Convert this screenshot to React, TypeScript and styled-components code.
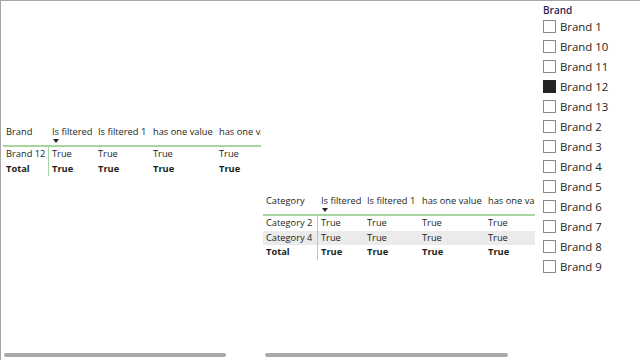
import React from "react";
import styled, { createGlobalStyle } from "styled-components";

const Global = createGlobalStyle`
  html, body { margin: 0; padding: 0; background: #ffffff; }
  body { font-family: "Open Sans", "Noto Sans", sans-serif; color: #252423; }
`;

const Page = styled.div`
  width: 640px;
  height: 360px;
  box-sizing: border-box;
  border-top: 1px solid #a6a6a6;
  border-left: 1px solid #a6a6a6;
  display: flex;
  overflow: hidden;
`;

const Visual = styled.div<{ $w: number; $top: number; $ml: number }>`
  width: ${(p) => p.$w}px;
  margin-left: ${(p) => p.$ml}px;
  padding-top: ${(p) => p.$top}px;
  box-sizing: border-box;
  display: flex;
  flex-direction: column;
  height: 100%;
  flex-shrink: 0;
`;

const TableClip = styled.div<{ $w: number }>`
  width: ${(p) => p.$w}px;
  overflow: hidden;
`;

const Grid = styled.div<{ $cols: string }>`
  display: grid;
  grid-template-columns: ${(p) => p.$cols};
  font-family: "Open Sans", "Noto Sans", sans-serif;
  font-size: 9.3px;
  line-height: 14px;
  width: max-content;
  color: #201f1e;
`;

const HeadCell = styled.div`
  height: 20px;
  padding: 1px 3px 0;
  white-space: nowrap;
  border-bottom: 2px solid #a8d5a0;
  position: relative;
  box-sizing: content-box;
`;

const SortArrow = styled.span`
  position: absolute;
  left: 4px;
  top: 15px;
  width: 0;
  height: 0;
  border-left: 3px solid transparent;
  border-right: 3px solid transparent;
  border-top: 4px solid #252423;
`;

const Cell = styled.div<{ $first?: boolean; $bold?: boolean; $alt?: boolean }>`
  height: 14.5px;
  line-height: 14px;
  padding: 0 3px;
  white-space: nowrap;
  font-weight: ${(p) => (p.$bold ? 700 : 400)};
  background: ${(p) => (p.$alt ? "#ebebeb" : "transparent")};
  border-right: ${(p) => (p.$first ? "1px solid #a8d5a0" : "none")};
`;

const Scroll = styled.div<{ $w: number; $ml: number }>`
  margin-top: auto;
  margin-bottom: 3px;
  margin-left: ${(p) => p.$ml}px;
  width: ${(p) => p.$w}px;
  height: 4px;
  border-radius: 2px;
  background: #a9a9a9;
`;

const Slicer = styled.div`
  margin-left: 8px;
  padding-top: 2px;
  display: flex;
  flex-direction: column;
  font-family: "Open Sans", "Noto Sans", sans-serif;
`;

const SlicerTitle = styled.div`
  font-size: 10px;
  line-height: 14px;
  color: #1f2a5c;
  font-weight: 600;
  margin-bottom: -1px;
`;

const Item = styled.div`
  display: flex;
  align-items: center;
  height: 20px;
  font-size: 11.4px;
  color: #252423;
`;

const Box = styled.span<{ $on?: boolean }>`
  width: 13px;
  height: 13px;
  box-sizing: border-box;
  border: 1px solid ${(p) => (p.$on ? "#252423" : "#8a8a8a")};
  background: ${(p) => (p.$on ? "#252423" : "#fff")};
  margin-right: 4px;
`;

const headers = ["Is filtered", "Is filtered 1", "has one value", "has one value 1"];

type Row = { label: string; vals: string[]; bold?: boolean; alt?: boolean };

function Table({ first, firstW, rows, clip }: { first: string; firstW: number; rows: Row[]; clip: number }) {
  return (
    <TableClip $w={clip}>
      <Grid $cols={`${firstW}px 46px 55px 66px 80px`}>
        <HeadCell>{first}</HeadCell>
        {headers.map((h, i) => (
          <HeadCell key={h}>
            {h}
            {i === 0 && <SortArrow />}
          </HeadCell>
        ))}
        {rows.map((r) => (
          <React.Fragment key={r.label}>
            <Cell $first $bold={r.bold} $alt={r.alt}>{r.label}</Cell>
            {r.vals.map((v, i) => (
              <Cell key={i} $bold={r.bold} $alt={r.alt}>{v}</Cell>
            ))}
          </React.Fragment>
        ))}
      </Grid>
    </TableClip>
  );
}

const T = ["True", "True", "True", "True"];

const brands = ["Brand 1", "Brand 10", "Brand 11", "Brand 12", "Brand 13", "Brand 2", "Brand 3", "Brand 4", "Brand 5", "Brand 6", "Brand 7", "Brand 8", "Brand 9"];

export default function App() {
  return (
    <>
      <Global />
      <Page>
        <Visual $w={260} $top={123} $ml={2}>
          <Table
            first="Brand"
            firstW={46}
            clip={258}
            rows={[
              { label: "Brand 12", vals: T },
              { label: "Total", vals: T, bold: true },
            ]}
          />
          <Scroll $w={222} $ml={1} />
        </Visual>
        <Visual $w={272} $top={192} $ml={0}>
          <Table
            first="Category"
            firstW={55}
            clip={272}
            rows={[
              { label: "Category 2", vals: T },
              { label: "Category 4", vals: T, alt: true },
              { label: "Total", vals: T, bold: true },
            ]}
          />
          <Scroll $w={243} $ml={2} />
        </Visual>
        <Slicer>
          <SlicerTitle>Brand</SlicerTitle>
          {brands.map((b) => (
            <Item key={b}>
              <Box $on={b === "Brand 12"} />
              {b}
            </Item>
          ))}
        </Slicer>
      </Page>
    </>
  );
}
